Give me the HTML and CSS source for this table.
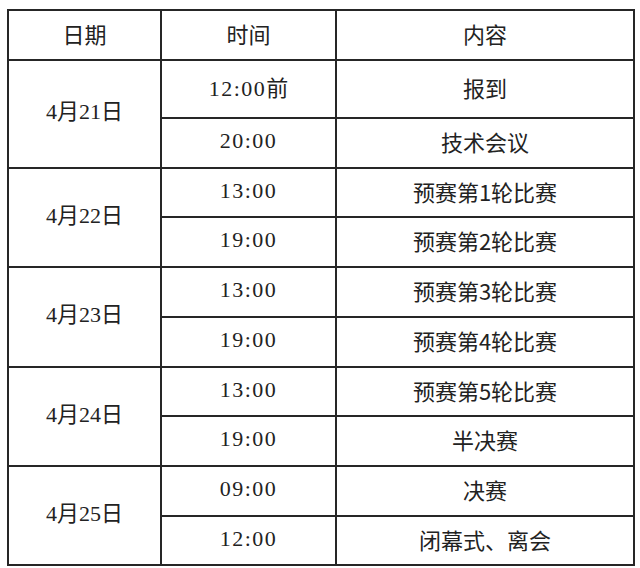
FILE: index.html
```html
<!DOCTYPE html>
<html lang="zh">
<head>
<meta charset="utf-8">
<link rel="stylesheet" href="styles.css">
</head>
<body>
<table class="schedule">
  <colgroup>
    <col class="c-date">
    <col class="c-time">
    <col class="c-content">
  </colgroup>
  <thead>
    <tr class="h50">
      <th>日期</th>
      <th>时间</th>
      <th>内容</th>
    </tr>
  </thead>
  <tbody>
    <tr class="h58"><td class="date" rowspan="2">4月21日</td><td class="time">12:00<span class="cjk">前</span></td><td>报到</td></tr>
    <tr class="h50"><td class="time">20:00</td><td>技术会议</td></tr>
    <tr class="h49"><td class="date" rowspan="2">4月22日</td><td class="time">13:00</td><td>预赛第1轮比赛</td></tr>
    <tr class="h50"><td class="time">19:00</td><td>预赛第2轮比赛</td></tr>
    <tr class="h50"><td class="date" rowspan="2">4月23日</td><td class="time">13:00</td><td>预赛第3轮比赛</td></tr>
    <tr class="h50"><td class="time">19:00</td><td>预赛第4轮比赛</td></tr>
    <tr class="h49"><td class="date" rowspan="2">4月24日</td><td class="time">13:00</td><td>预赛第5轮比赛</td></tr>
    <tr class="h50"><td class="time">19:00</td><td>半决赛</td></tr>
    <tr class="h50"><td class="date" rowspan="2">4月25日</td><td class="time">09:00</td><td>决赛</td></tr>
    <tr class="h49"><td class="time">12:00</td><td>闭幕式、离会</td></tr>
  </tbody>
</table>
</body>
</html>
```
FILE: styles.css
```css
html, body {
  margin: 0;
  padding: 0;
  background: #ffffff;
}

.schedule {
  margin: 9px 0 0 7px;
  width: 626px;
  border-collapse: collapse;
  table-layout: fixed;
  color: #222222;
  font-family: "Noto Sans CJK SC", sans-serif;
  font-size: 22px;
  border: 2px solid #262626;
}

.c-date { width: 153px; }
.c-time { width: 175px; }
.c-content { width: 298px; }

.schedule th,
.schedule td {
  border: 2px solid #262626;
  padding: 0 0 4px 0;
  text-align: center;
  vertical-align: middle;
  font-weight: normal;
  line-height: 1;
}

.h50 { height: 50px; }
.h49 { height: 49px; }
.h58 { height: 58px; }

.date {
  font-family: "Liberation Serif", "Noto Sans CJK SC", serif;
  font-size: 22px;
}

.time {
  font-family: "Liberation Serif", "Noto Sans CJK SC", serif;
  font-size: 22px;
  letter-spacing: 1.5px;
}

.cjk {
  font-family: "Noto Sans CJK SC", sans-serif;
  letter-spacing: 0;
}
```
